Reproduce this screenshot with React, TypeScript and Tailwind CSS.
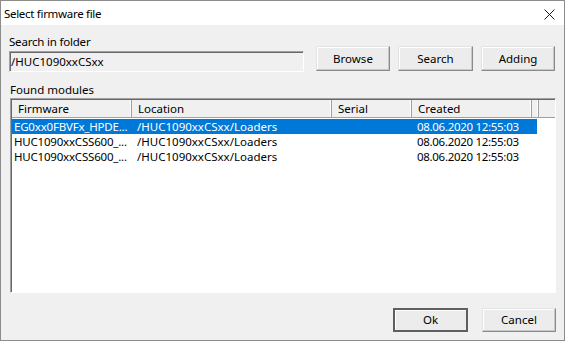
const FONT = "font-['Noto_Sans',sans-serif]";

const ROWS = [
  {
    firmware: "EG0xx0FBVFx_HPDE...",
    location: "/HUC1090xxCSxx/Loaders",
    serial: "",
    created: "08.06.2020 12:55:03",
    selected: true,
  },
  {
    firmware: "HUC1090xxCSS600_...",
    location: "/HUC1090xxCSxx/Loaders",
    serial: "",
    created: "08.06.2020 12:55:03",
    selected: false,
  },
  {
    firmware: "HUC1090xxCSS600_...",
    location: "/HUC1090xxCSxx/Loaders",
    serial: "",
    created: "08.06.2020 12:55:03",
    selected: false,
  },
];

function Button({ label, isDefault, className }: { label: string; isDefault?: boolean; className?: string }) {
  return (
    <div
      className={
        "flex items-center justify-center bg-[#ececec] text-black " +
        (isDefault
          ? "border-2 border-[#5f5f5f] shadow-[inset_1px_1px_0_#ffffff]"
          : "border border-t-[#e3e3e3] border-l-[#e3e3e3] border-r-[#8a8a8a] border-b-[#8a8a8a] shadow-[inset_-1px_-1px_0_#c8c8c8,inset_1px_1px_0_#ffffff]") +
        " " +
        (className ?? "")
      }
    >
      {label}
    </div>
  );
}

function HeaderCell({ label, className }: { label: string; className: string }) {
  return (
    <div className={"flex h-full items-center border-r border-r-[#a0a0a0] pl-[6px] shadow-[inset_-1px_0_0_#ffffff] " + className}>
      {label}
    </div>
  );
}

export default function App() {
  return (
    <div className={"flex h-[341px] w-[565px] flex-col border border-[#8c8c8c] bg-[#f0f0f0] text-[11.5px] leading-[16px] text-black " + FONT}>
      {/* Title bar */}
      <div className="flex h-[24px] items-center justify-between bg-white pl-[3px] pr-[9px]">
        <span className="pt-[1px] tracking-[-0.3px]">Select firmware file</span>
        <svg width="11" height="11" viewBox="0 0 11 11" className="mt-[2px]">
          <path d="M0.5 0.5 L10.5 10.5 M10.5 0.5 L0.5 10.5" stroke="#1a1a1a" strokeWidth="1" />
        </svg>
      </div>

      {/* Folder row */}
      <div className="mt-[9px] flex items-end pl-[8px] pr-[8px]">
        <div className="flex w-[295px] flex-col">
          <span className="h-[17px] tracking-[-0.2px]">Search in folder</span>
          <div className="flex h-[21px] items-center border border-t-[#a0a0a0] border-l-[#a0a0a0] border-r-[#ffffff] border-b-[#ffffff] pl-[1px] shadow-[inset_1px_1px_0_#696969]">
            /HUC1090xxCSxx
          </div>
        </div>
        <div className="mb-[1px] ml-[12px] flex gap-[8px]">
          <Button label="Browse" className="h-[25px] w-[74px]" />
          <Button label="Search" className="h-[25px] w-[75px]" />
          <Button label="Adding" className="h-[25px] w-[74px]" />
        </div>
      </div>

      {/* Found modules */}
      <div className="mt-[10px] flex flex-col pl-[9px] pr-[8px]">
        <span className="h-[16px]">Found modules</span>
        <div className="flex h-[195px] flex-col border border-t-[#a0a0a0] border-l-[#a0a0a0] border-r-[#ffffff] border-b-[#ffffff] bg-white shadow-[inset_1px_1px_0_#696969]">
          <div className="ml-[1px] mt-[1px] flex h-[18px] items-center border-b border-b-[#a0a0a0] bg-[#f0f0f0]">
            <HeaderCell label="Firmware" className="w-[120px]" />
            <HeaderCell label="Location" className="w-[200px]" />
            <HeaderCell label="Serial" className="w-[80px]" />
            <HeaderCell label="Created" className="w-[120px]" />
            <HeaderCell label="" className="w-[5px] pl-0" />
          </div>
          <div className="mt-[1px] flex flex-col pl-[1px]">
            {ROWS.map((r, i) => (
              <div
                key={i}
                className={
                  "flex h-[15px] w-[525px] items-center whitespace-nowrap " +
                  (r.selected ? "bg-[#0078d7] text-white" : "")
                }
              >
                <span className="w-[125px] overflow-hidden pl-[2px] tracking-[-0.2px]">{r.firmware}</span>
                <span className="w-[200px] overflow-hidden">{r.location}</span>
                <span className="w-[80px] overflow-hidden">{r.serial}</span>
                <span className="w-[120px] overflow-hidden tracking-[-0.3px]">{r.created}</span>
              </div>
            ))}
          </div>
        </div>
      </div>

      {/* Dialog buttons */}
      <div className="mt-[15px] flex justify-end gap-[14px] pr-[8px]">
        <Button label="Ok" isDefault className="h-[24px] w-[75px]" />
        <Button label="Cancel" className="h-[24px] w-[74px]" />
      </div>
    </div>
  );
}
